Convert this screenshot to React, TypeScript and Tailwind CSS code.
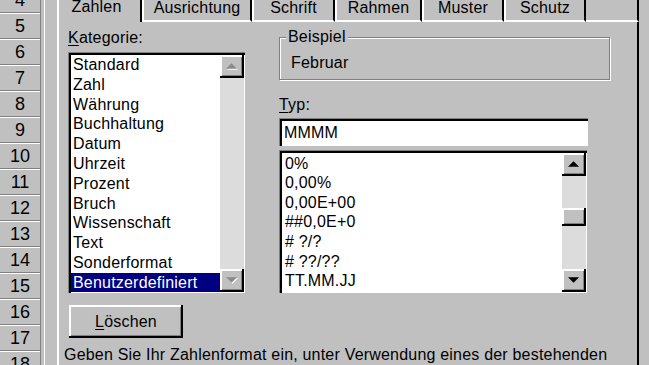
import React from "react";

const rows = [4, 5, 6, 7, 8, 9, 10, 11, 12, 13, 14, 15, 16, 17, 18];

function RowHeaders() {
  return (
    <div className="w-[41px] shrink-0 flex flex-col -mt-[13px] border-r border-[#808080] tracking-normal">
      {rows.map((n) => (
        <div
          key={n}
          className="h-[26px] shrink-0 border-b border-[#808080] shadow-[inset_0_1px_#ffffff] flex items-center justify-center text-[18px] leading-none text-black"
        >
          {n}
        </div>
      ))}
    </div>
  );
}

function Arrow({ dir, disabled }: { dir: "up" | "down"; disabled?: boolean }) {
  const up = "M0 6 L6 0 L12 6 Z";
  const down = "M0 0 L12 0 L6 6 Z";
  return (
    <svg width="12" height="7" viewBox="0 0 13 7" className="overflow-visible">
      {disabled && (
        <path d={dir === "up" ? "M1 7 L7 1 L13 7 Z" : "M1 1 L13 1 L7 7 Z"} fill="#ffffff" />
      )}
      <path d={dir === "up" ? up : down} fill={disabled ? "#8a8a8a" : "#000000"} />
    </svg>
  );
}

function ScrollBtn({ dir, disabled }: { dir: "up" | "down"; disabled?: boolean }) {
  return (
    <div className="h-[23px] w-full shrink-0 bg-[#c0c0c0] flex items-center justify-center shadow-[inset_-2px_-2px_#000000,inset_2px_2px_#ffffff,inset_-3px_-3px_#808080]">
      <Arrow dir={dir} disabled={disabled} />
    </div>
  );
}

const kategorien = [
  "Standard",
  "Zahl",
  "Währung",
  "Buchhaltung",
  "Datum",
  "Uhrzeit",
  "Prozent",
  "Bruch",
  "Wissenschaft",
  "Text",
  "Sonderformat",
  "Benutzerdefiniert",
];

const typen = ["0%", "0,00%", "0,00E+00", "##0,0E+0", "# ?/?", "# ??/??", "TT.MM.JJ"];

const sunken =
  "shadow-[inset_1px_1px_#808080,inset_3px_3px_#000000,inset_-1px_-1px_#ffffff] pt-[3px] pl-[3px] pr-[1px] pb-[1px]";

const tabs = [
  { label: "Ausrichtung", w: "w-[110px]" },
  { label: "Schrift", w: "w-[83px]" },
  { label: "Rahmen", w: "w-[87px]" },
  { label: "Muster", w: "w-[82px]" },
  { label: "Schutz", w: "w-[82px]" },
];

export default function App() {
  return (
    <div className="w-[649px] h-[365px] overflow-hidden flex bg-[#c0c0c0] text-black font-['Liberation_Sans',Arial,sans-serif] text-[16px] tracking-[0.2px]">
      <RowHeaders />
      <div className="flex-1 flex flex-col pl-[4px] shadow-[inset_3px_0_#c0c0c0,inset_4px_0_#ffffff] overflow-hidden">
        {/* Tabs */}
        <div className="h-[22px] shrink-0 flex pl-[12px] pr-[10px]">
          <div className="w-[85px] h-[22px] border-l-2 border-white border-r-2 border-r-[#000000] flex justify-center pr-[6px]">
            <span className="block leading-[18px] -mt-[2px]">Zahlen</span>
          </div>
          {tabs.map((t) => (
            <div
              key={t.label}
              className={`${t.w} h-[22px] border-l-2 border-white border-r-2 border-r-[#000000] border-b-2 border-b-white flex justify-center`}
            >
              <span className="block leading-[18px] -mt-[1px]">{t.label}</span>
            </div>
          ))}
          <div className="flex-1 h-[22px] border-b-2 border-white border-r-2 border-r-[#000000]" />
        </div>

        {/* Panel */}
        <div className="flex-1 ml-[12px] mr-[10px] border-l-2 border-white border-r-2 border-r-[#000000] pl-[9px] pt-[7px] flex flex-col">
          <div className="flex items-start">
            {/* Left column */}
            <div className="w-[177px] shrink-0 flex flex-col">
              <div className="h-[18px] leading-[18px]">
                <span className="underline underline-offset-[2px]">K</span>ategorie:
              </div>
              <div className={`mt-[5px] h-[241px] flex ${sunken}`}>
                <div className="flex-1 bg-white overflow-hidden flex flex-col">
                  {kategorien.map((k, i) => (
                    <div
                      key={k}
                      className={`h-[19.8px] shrink-0 leading-[19.8px] pl-[2px] whitespace-nowrap ${
                        i === kategorien.length - 1 ? "bg-[#000080] text-white" : ""
                      }`}
                    >
                      {k}
                    </div>
                  ))}
                </div>
                <div className="w-[24px] shrink-0 bg-[#dcdcdc] flex flex-col justify-between">
                  <ScrollBtn dir="up" disabled />
                  <ScrollBtn dir="down" disabled />
                </div>
              </div>
            </div>

            {/* Right column */}
            <div className="ml-[34px] w-[331px] shrink-0 flex flex-col">
              <div className="mt-[8px] h-[43px] relative border border-[#808080] shadow-[inset_1px_1px_#ffffff,1px_1px_#ffffff] pl-[11px] pt-[16px]">
                <span className="absolute left-[6px] -top-[10px] px-[2px] bg-[#c0c0c0] leading-[18px]">
                  Beispiel
                </span>
                <div className="leading-[18px]">Februar</div>
              </div>
              <div className="mt-[16px] h-[18px] leading-[18px]">
                <span className="underline underline-offset-[2px]">T</span>yp:
              </div>
              <div className={`mt-[4px] w-[309px] h-[28px] flex bg-white ${sunken}`}>
                <div className="flex-1 bg-white flex items-center pl-[2px] leading-[18px]">MMMM</div>
              </div>
              <div className={`mt-[4px] w-[308px] h-[143px] flex ${sunken}`}>
                <div className="flex-1 bg-white overflow-hidden flex flex-col pt-[0.5px]">
                  {typen.map((t) => (
                    <div key={t} className="h-[19.67px] shrink-0 leading-[19.67px] pl-[3px] whitespace-nowrap">
                      {t}
                    </div>
                  ))}
                </div>
                <div className="w-[24px] shrink-0 bg-[#dcdcdc] flex flex-col">
                  <ScrollBtn dir="up" />
                  <div className="mt-[32px] h-[18px] shrink-0 bg-[#c0c0c0] shadow-[inset_-2px_-2px_#000000,inset_2px_2px_#ffffff,inset_-3px_-3px_#808080]" />
                  <div className="flex-1" />
                  <ScrollBtn dir="down" />
                </div>
              </div>
            </div>
          </div>

          <div className="mt-[12px] ml-[1px] w-[114px] h-[33px] shrink-0 flex items-center justify-center shadow-[inset_-2px_-2px_#000000,inset_2px_2px_#ffffff,inset_-3px_-3px_#808080] leading-[18px]">
            <span>
              <span className="underline underline-offset-[2px]">L</span>öschen
            </span>
          </div>

          <p className="mt-[8px] -ml-[4px] w-[568px] leading-[18px]">
            Geben Sie Ihr Zahlenformat ein, unter Verwendung eines der bestehenden Formate als
            Ausgangspunkt.
          </p>
        </div>
      </div>
    </div>
  );
}
